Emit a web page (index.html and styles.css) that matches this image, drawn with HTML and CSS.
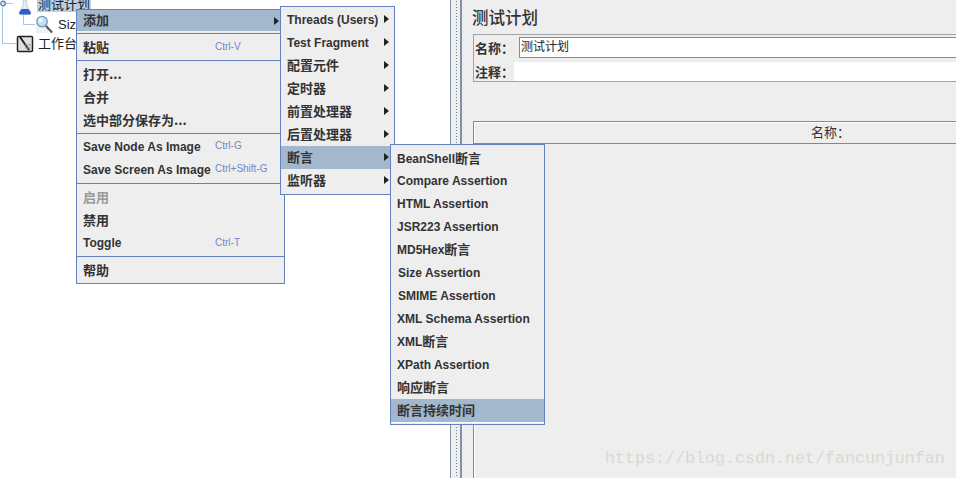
FILE: index.html
```html
<!DOCTYPE html>
<html lang="zh">
<head>
<meta charset="utf-8">
<title>JMeter</title>
<link rel="stylesheet" href="styles.css">
</head>
<body>
<div class="app">
  <div class="tree">
    <svg class="tree-lines" width="40" height="50" viewBox="0 0 40 50"><path d="M2.500 7V43.500H16M6 3.500H13M23.500 14V24.500H35" fill="none" stroke="#a9c4de"/><circle cx="3" cy="3.500" r="2.300" fill="#dce8f3" stroke="#4a7fb0" stroke-width="1.200"/></svg>
    <div class="tree-row row-plan">
      <svg class="icon-flask" width="16" height="16" viewBox="0 0 16 16"><path d="M6.300 0H9.700V5L13.500 12Q14.500 14.500 12.500 14.500H3.500Q1.500 14.500 2.500 12L6.300 5Z" fill="#e3ebf4" stroke="#a6b8ca" stroke-width=".6"/><path d="M4.600 9H11.400L13.500 12Q14.500 14.500 12.500 14.500H3.500Q1.500 14.500 2.500 12Z" fill="#2f5fc4"/></svg>
      <span class="tree-label selected">测试计划</span>
    </div>
    <div class="tree-row row-size">
      <svg class="icon-glass" width="19" height="19" viewBox="0 0 19 19"><rect x="1" y="5" width="12" height="13" fill="#eef0f3"/><path d="M11 11L17 17.500" stroke="#55585c" stroke-width="2.200"/><circle cx="7" cy="6.500" r="5.200" fill="#bfe3f5" stroke="#7e9ab0" stroke-width="1.300"/><circle cx="5.500" cy="5" r="2" fill="#eefaff"/></svg>
      <span class="tree-label">Size Assertion</span>
    </div>
    <div class="tree-row row-bench">
      <svg class="icon-note" width="18" height="18" viewBox="0 0 18 18"><rect x="1.500" y="1.500" width="15" height="15" rx="1" fill="#dfe2dc" stroke="#222" stroke-width="1.500"/><path d="M4 2L13 15" stroke="#222" stroke-width="2"/><path d="M9 10H15M9 13H15" stroke="#999"/></svg>
      <span class="tree-label">工作台</span>
    </div>
  </div>
  <div class="divider"><div class="grip"></div></div>
  <main class="panel">
    <h1 class="panel-title">测试计划</h1>
    <div class="fields">
      <div class="field"><span class="field-label">名称：</span><div class="name-input">测试计划</div></div>
      <div class="field field-comment"><span class="field-label">注释：</span><div class="comment-input"></div></div>
    </div>
    <div class="table">
      <div class="table-head">名称：</div>
    </div>
  </main>
</div>

<div class="menu menu-main">
  <div class="item active"><span class="label cjk">添加</span><span class="arrow"></span></div>
  <div class="sep sep-first"></div>
  <div class="item"><span class="label cjk">粘贴</span><span class="key">Ctrl-V</span></div>
  <div class="sep sep-a"></div>
  <div class="item"><span class="label cjk">打开...</span></div>
  <div class="item"><span class="label cjk">合并</span></div>
  <div class="item"><span class="label cjk">选中部分保存为...</span></div>
  <div class="sep sep-b"></div>
  <div class="item"><span class="label">Save Node As Image</span><span class="key">Ctrl-G</span></div>
  <div class="item"><span class="label">Save Screen As Image</span><span class="key">Ctrl+Shift-G</span></div>
  <div class="sep sep-a sep-c"></div>
  <div class="item disabled"><span class="label cjk">启用</span></div>
  <div class="item"><span class="label cjk">禁用</span></div>
  <div class="item"><span class="label lift">Toggle</span><span class="key">Ctrl-T</span></div>
  <div class="sep sep-a"></div>
  <div class="item"><span class="label cjk">帮助</span></div>
</div>

<div class="menu menu-add">
  <div class="item"><span class="label">Threads (Users)</span><span class="arrow"></span></div>
  <div class="item"><span class="label">Test Fragment</span><span class="arrow"></span></div>
  <div class="item"><span class="label cjk">配置元件</span><span class="arrow"></span></div>
  <div class="item"><span class="label cjk">定时器</span><span class="arrow"></span></div>
  <div class="item"><span class="label cjk">前置处理器</span><span class="arrow"></span></div>
  <div class="item"><span class="label cjk">后置处理器</span><span class="arrow"></span></div>
  <div class="item active"><span class="label cjk">断言</span><span class="arrow"></span></div>
  <div class="item"><span class="label cjk">监听器</span><span class="arrow"></span></div>
</div>

<div class="menu menu-assert">
  <div class="item"><span class="label">BeanShell<span class="cjk-inline">断言</span></span></div>
  <div class="item"><span class="label">Compare Assertion</span></div>
  <div class="item"><span class="label">HTML Assertion</span></div>
  <div class="item"><span class="label">JSR223 Assertion</span></div>
  <div class="item"><span class="label lift">MD5Hex<span class="cjk-inline">断言</span></span></div>
  <div class="item"><span class="label nudge">Size Assertion</span></div>
  <div class="item"><span class="label nudge">SMIME Assertion</span></div>
  <div class="item"><span class="label">XML Schema Assertion</span></div>
  <div class="item"><span class="label lift">XML<span class="cjk-inline">断言</span></span></div>
  <div class="item"><span class="label">XPath Assertion</span></div>
  <div class="item"><span class="label cjk">响应断言</span></div>
  <div class="item active"><span class="label cjk">断言持续时间</span></div>
</div>

<div class="watermark">https://blog.csdn.net/fancunjunfan</div>
</body>
</html>
```
FILE: styles.css
```css
* { box-sizing: border-box; }
html, body { margin: 0; padding: 0; }
body {
  width: 956px;
  height: 478px;
  overflow: hidden;
  position: relative;
  font-family: "Liberation Sans", "Noto Sans CJK SC", sans-serif;
  color: #333;
  background: #fff;
}
.app { display: flex; width: 956px; height: 478px; overflow: hidden; }

.tree { position: relative; width: 450px; flex: none; background: #fff; overflow: hidden; }
.tree-lines { position: absolute; left: 0; top: 0; }
.tree-row { display: flex; align-items: center; height: 20px; position: relative; }
.row-plan { margin-top: -6px; padding-left: 17px; gap: 4px; }
.icon-flask { align-self: flex-start; margin-top: 6px; }
.row-size { padding-left: 35px; gap: 3px; }
.row-bench { padding-left: 16px; gap: 3px; height: 19px; }
.tree-label { font-size: 13px; color: #222; line-height: 15px; white-space: nowrap; padding: 0 1px; }
.tree-label.selected { background: #b8cfe5; }

.divider { width: 12px; flex: none; background: #eee; border-left: 1px solid #8291a8; border-right: 2px solid #7f92b0; display: flex; justify-content: center; }
.grip { width: 3px; height: 100%; margin-left: 2px; background-image: radial-gradient(circle, #6f8296 0.8px, transparent 0.9px); background-size: 3px 3px; }

.panel { flex: 1; background: #eee; padding: 9px 0 0 11px; min-width: 0; }
.panel-title { margin: 0 0 7px -1px; font-size: 16.5px; line-height: 18px; font-weight: 500; color: #333; }
.fields { border: 1px solid #a3a3a3; border-right: 0; height: 48px; padding: 1px 0 0 1px; }
.field { display: flex; align-items: center; height: 22px; }
.field-comment { height: 19px; margin-top: 4px; }
.field-label { width: 44px; flex: none; font-size: 13px; font-weight: 700; color: #333; white-space: nowrap; }
.name-input { flex: 1; height: 21px; background: #fff; border-top: 1px solid #7a8ea8; border-left: 1px solid #7a8ea8; border-bottom: 1px solid #7a8ea8; font-size: 12px; line-height: 19px; padding-left: 1px; color: #222; }
.comment-input { flex: 1; height: 19px; margin-left: -5px; background: #fff; }
.table { margin-top: 39px; width: 714px; height: 360px; border-top: 1px solid #808a96; border-left: 1px solid #808a96; box-shadow: inset 1px 1px 0 #fff; }
.table-head { height: 22px; border-bottom: 1px solid #808a96; text-align: center; font-size: 13px; line-height: 22px; color: #333; }

.menu { position: absolute; background: #eee; border: 1px solid #6382bf; z-index: 1; }
.menu-main { left: 76px; top: 9px; width: 209px; height: 275px; }
.menu-add { left: 280px; top: 6px; width: 115px; height: 189px; z-index: 2; padding-top: 1px; }
.menu-assert { left: 390px; top: 144px; width: 155px; height: 281px; z-index: 3; padding-top: 1px; }
.item { display: flex; align-items: center; height: 23px; padding-left: 6px; position: relative; font-size: 12px; font-weight: 700; color: #333; white-space: nowrap; }
.item.active { background: #a3b8cc; }
.menu-main .item.active { height: 21px; }
.menu-assert .item.active { height: 23px; box-shadow: 0 1px 0 #fff; }
.item.disabled { color: #999; }
.cjk { font-family: "Noto Sans CJK SC", sans-serif; font-size: 13px; padding-bottom: 2px; }
.cjk-inline { font-family: "Noto Sans CJK SC", sans-serif; font-size: 13px; }
.lift { padding-bottom: 2px; }
.nudge { padding-left: 1px; }
.key { position: absolute; left: 138px; top: 4px; font-size: 10px; font-weight: 400; line-height: 13px; color: #6f88c6; }
.arrow { position: absolute; right: 5px; top: 7px; width: 0; height: 0; border-left: 5px solid #222; border-top: 4px solid transparent; border-bottom: 4px solid transparent; }
.sep { height: 1px; background: #6382bf; }
.sep-first { margin: 2px 0; }
.sep-a { margin: 1px 0 2px; }
.sep-b { margin: 1px 0; }
.sep-c { margin-top: 2px; }

.watermark { position: absolute; left: 605px; top: 450px; z-index: 4; font-family: "Liberation Mono", monospace; font-size: 16.67px; line-height: 18px; color: #d9d9d3; white-space: nowrap; }
```
